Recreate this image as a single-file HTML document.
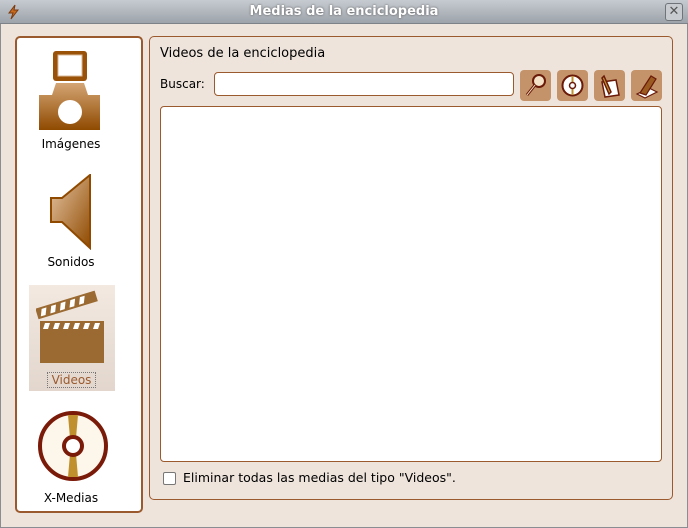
<!DOCTYPE html>
<html><head><meta charset="utf-8"><style>
*{margin:0;padding:0;box-sizing:border-box}
body{width:688px;height:528px;overflow:hidden;background:#eee4dc;font-family:"DejaVu Sans","Liberation Sans",sans-serif;font-size:12px;color:#000;position:relative}
.abs{position:absolute}
#title{left:0;top:0;width:688px;height:24px;background:linear-gradient(#c6cbd1,#9da3aa);border-bottom:1px solid #7d8288;color:#fff;font-weight:bold;font-size:13px;text-align:center;line-height:24px;text-shadow:0 0 2px #555}
#frame{left:0;top:24px;width:688px;height:504px;border:1px solid #8a8e93;border-top:none}
#left{left:15px;top:36px;width:128px;height:477px;background:#fff;border:2px solid #9b5a2e;border-radius:5px}
#right{left:149px;top:36px;width:524px;height:464px;border:1px solid #9b5a2e;border-radius:5px}
.lbl{width:128px;text-align:center;font-size:12px}
.btn{top:70px;width:31px;height:31px;background:#c4936a;border-radius:4px}
</style></head><body>
<div id="title" class="abs">Medias de la enciclopedia</div>
<div class="abs" style="left:6px;top:4px;width:14px;height:16px"><svg width="14" height="16"><path d="M9 1 L3 9 L7 9 L5 15 L12 6 L8 6 Z" fill="#c86a1e" stroke="#7a3a10" stroke-width="1"/></svg></div>
<div class="abs" style="left:665px;top:3px;width:18px;height:18px;border:1px solid #6e747a;border-radius:3px;background:#c8ccd1;text-align:center;line-height:16px;color:#555;font-size:13px">✕</div>
<div id="frame" class="abs"></div>

<div id="left" class="abs"></div>
<svg class="abs" style="left:38px;top:50px" width="64" height="82">
<defs><linearGradient id="g1" x1="0" y1="0" x2="0" y2="1"><stop offset="0" stop-color="#d4a574"/><stop offset="1" stop-color="#8f4a00"/></linearGradient>
<linearGradient id="g2" x1="0" y1="0" x2="1" y2="1"><stop offset="0" stop-color="#e6c6a6"/><stop offset="1" stop-color="#8f4a00"/></linearGradient></defs>
<rect x="15" y="1" width="34" height="30" rx="3" fill="#9a5208"/>
<rect x="20" y="5" width="24" height="21" fill="#fff" stroke="#d8b898"/>
<path d="M18 33 H46 L50 45 H62 V80 H1 V45 H14 Z" fill="url(#g1)"/>
<circle cx="32" cy="62" r="12" fill="#fff"/>
</svg>
<div class="abs lbl" style="left:7px;top:137px">Imágenes</div>
<svg class="abs" style="left:50px;top:174px" width="42" height="76">
<path d="M1 24 H12 L40 1 V74 L12 48 H1 Z" fill="url(#g2)" stroke="#8f4a00" stroke-width="2"/>
</svg>
<div class="abs lbl" style="left:7px;top:255px">Sonidos</div>
<div class="abs" style="left:29px;top:285px;width:86px;height:106px;background:linear-gradient(#f3e9e1,#e2d6cd)"></div>
<svg class="abs" style="left:36px;top:290px" width="72" height="76">
<g transform="translate(0,10) rotate(-17 4 24)"><rect x="4" y="8" width="62" height="11" fill="#9a6a32"/>
<g fill="#fff"><path d="M10 10h5l-3 7h-5z"/><path d="M20 10h5l-3 7h-5z"/><path d="M30 10h5l-3 7h-5z"/><path d="M40 10h5l-3 7h-5z"/><path d="M50 10h5l-3 7h-5z"/></g></g>
<rect x="4" y="31" width="64" height="42" fill="#9a6a32"/>
<g fill="#fff"><path d="M9 33h5l-2 6h-5z"/><path d="M19 33h5l-2 6h-5z"/><path d="M29 33h5l-2 6h-5z"/><path d="M39 33h5l-2 6h-5z"/><path d="M49 33h5l-2 6h-5z"/><path d="M59 33h5l-2 6h-5z"/></g>
</svg>
<div class="abs" style="left:47px;top:372px;width:49px;height:16px;border:1px dotted #777;color:#9b5a2e;text-align:center;line-height:14px">Videos</div>
<svg class="abs" style="left:37px;top:410px" width="72" height="72">
<circle cx="36" cy="36" r="33" fill="#fdf6ea" stroke="#7a1a08" stroke-width="4"/>
<path d="M31 5 H41 L39 28 H33 Z M33 44 H39 L41 67 H31 Z" fill="#c0902e"/>
<circle cx="36" cy="36" r="9" fill="#fff" stroke="#7a1a08" stroke-width="4"/>
</svg>
<div class="abs lbl" style="left:7px;top:491px">X-Medias</div>

<div id="right" class="abs"></div>
<div class="abs" style="left:160px;top:46px;font-size:13px">Videos de la enciclopedia</div>
<div class="abs" style="left:160px;top:77px">Buscar:</div>
<div class="abs" style="left:214px;top:72px;width:300px;height:24px;background:#fff;border:1px solid #9b5a2e;border-radius:4px"></div>
<div class="abs btn" style="left:520px"><svg width="31" height="31"><circle cx="19" cy="11" r="6" fill="#f4e2c8" stroke="#6a1a08" stroke-width="2"/><path d="M15 15 L7 25" stroke="#6a1a08" stroke-width="3"/><path d="M15 15 L7 25" stroke="#f4e2c8" stroke-width="1"/></svg></div>
<div class="abs btn" style="left:557px"><svg width="31" height="31"><circle cx="15.5" cy="15.5" r="10" fill="#fff" stroke="#6a1a08" stroke-width="2"/><path d="M14.5 6h2v19h-2z" fill="#c0902e"/><circle cx="15.5" cy="15.5" r="3" fill="#fff" stroke="#6a1a08" stroke-width="1.5"/></svg></div>
<div class="abs btn" style="left:594px"><svg width="31" height="31"><path d="M8 12 L22 10 L25 25 L11 27 Z" fill="#fff" stroke="#6a1a08" stroke-width="1.5"/><path d="M10 6 L17 22 L15 24 L8 8 Z" fill="#c0902e" stroke="#6a1a08" stroke-width="1.5"/></svg></div>
<div class="abs btn" style="left:631px"><svg width="31" height="31"><path d="M6 24 L14 28 L26 22 L18 18 Z" fill="#fff" stroke="#6a1a08" stroke-width="1.2"/><path d="M9 23 L20 6 L25 9 L15 25 Z" fill="#9a5a20" stroke="#6a1a08" stroke-width="1.2"/></svg></div>
<div class="abs" style="left:160px;top:106px;width:502px;height:356px;background:#fff;border:1px solid #9b5a2e;border-radius:4px"></div>
<div class="abs" style="left:163px;top:472px;width:13px;height:13px;background:#fff;border:1px solid #777;border-radius:2px"></div>
<div class="abs" style="left:183px;top:470px;font-size:12.5px">Eliminar todas las medias del tipo "Videos".</div>
</body></html>
